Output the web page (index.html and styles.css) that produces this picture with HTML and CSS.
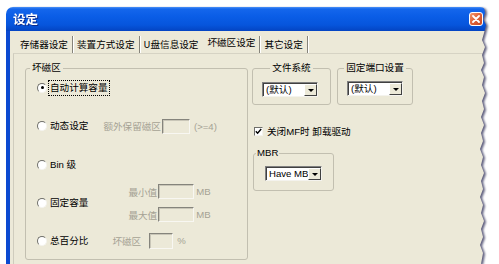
FILE: index.html
```html
<!DOCTYPE html>
<html lang="zh-CN">
<head>
<meta charset="utf-8">
<title>设定</title>
<link rel="stylesheet" href="styles.css">
</head>
<body>
<div class="shadow">
  <div class="window">
    <div class="titlebar">
      <span class="title">设定</span>
      <span class="close"><svg width="8" height="8" viewBox="0 0 8 8"><path d="M1 1 L7 7 M7 1 L1 7" stroke="#fff" stroke-width="1.8" stroke-linecap="round"/></svg></span>
    </div>
    <div class="client">
      <div class="tabs">
        <span class="tab">存储器设定</span>
        <span class="tab">装置方式设定</span>
        <span class="tab pre-active">U盘信息设定</span>
        <span class="tab active">坏磁区设定</span>
        <span class="tab">其它设定</span>
      </div>
      <div class="panel">
        <fieldset class="group bad">
          <legend class="lg-left">坏磁区</legend>
          <div class="rows">
            <div class="row">
              <span class="radio checked"></span><span class="label focus">自动计算容量</span>
            </div>
            <div class="row">
              <span class="radio"></span><span class="label">动态设定</span>
              <span class="dim extra-a">额外保留磁区</span><span class="input in-a"></span><span class="dim note">(&gt;=4)</span>
            </div>
            <div class="row">
              <span class="radio"></span><span class="label">Bin 级</span>
            </div>
            <div class="row">
              <span class="radio"></span><span class="label">固定容量</span>
              <div class="minmax">
                <div class="mm-line"><span class="dim">最小值</span><span class="input in-b"></span><span class="dim unit">MB</span></div>
                <div class="mm-line"><span class="dim">最大值</span><span class="input in-b"></span><span class="dim unit">MB</span></div>
              </div>
            </div>
            <div class="row">
              <span class="radio"></span><span class="label">总百分比</span>
              <span class="dim extra-c">坏磁区</span><span class="input in-c"></span><span class="dim pct">%</span>
            </div>
          </div>
        </fieldset>
        <div class="right">
          <div class="top-groups">
            <fieldset class="group fs-group">
              <legend class="lg-center">文件系统</legend>
              <div class="select sel-fs"><span class="val">(默认)</span><span class="btn"><span class="tri"></span></span></div>
            </fieldset>
            <fieldset class="group port-group">
              <legend class="lg-center">固定端口设置</legend>
              <div class="select sel-port"><span class="val">(默认)</span><span class="btn"><span class="tri"></span></span></div>
            </fieldset>
          </div>
          <div class="check-row">
            <span class="checkbox"><svg width="7" height="7" viewBox="0 0 7 7"><path d="M0.8 3.2 L2.6 5.2 L6.2 1" fill="none" stroke="#000" stroke-width="1.4"/></svg></span>
            <span class="check-label">关闭MF时 卸载驱动</span>
          </div>
          <fieldset class="group mbr">
            <legend class="lg-left2">MBR</legend>
            <div class="select sel-mbr"><span class="val">Have MB</span><span class="btn"><span class="tri"></span></span></div>
          </fieldset>
        </div>
      </div>
    </div>
  </div>
</div>
</body>
</html>
```

FILE: styles.css
```css
html, body {
  margin: 0;
  padding: 0;
  background: #fff;
  height: 264px;
  overflow: hidden;
}
body {
  font-family: "Liberation Sans", "Noto Sans CJK SC", sans-serif;
  font-size: 9.6px;
  color: #000;
}
.shadow {
  padding: 7px 0 0 6px;
  filter: drop-shadow(2px 1px 1px rgba(25, 25, 70, 0.7));
}
.window {
  width: 481px;
  height: 257px;
  display: flex;
  flex-direction: column;
  clip-path: polygon(0 0, 478px 0, 479px 6px, 477px 12px, 480px 18px, 478px 26px, 476px 33px, 479px 40px, 476px 48px, 478px 56px, 475px 63px, 478px 70px, 476px 78px, 479px 86px, 476px 94px, 478px 102px, 475px 110px, 478px 118px, 475px 126px, 477px 134px, 474px 142px, 477px 150px, 475px 158px, 478px 166px, 475px 174px, 477px 182px, 474px 190px, 477px 198px, 475px 206px, 478px 214px, 475px 222px, 477px 230px, 474px 238px, 477px 246px, 475px 257px, 0 257px);
}
.titlebar {
  flex: none;
  height: 24px;
  box-sizing: border-box;
  display: flex;
  align-items: center;
  justify-content: space-between;
  padding: 0 4px 0 7px;
  border-radius: 7px 7px 0 0;
  background: linear-gradient(#4a90f5 0, #1466ec 2px, #0a5de6 40%, #0655dc 75%, #0444c2 100%);
}
.title {
  color: #fff;
  font-family: "Noto Sans CJK SC", sans-serif;
  font-weight: bold;
  font-size: 12.5px;
  line-height: 14px;
  text-shadow: 1px 1px 0 #0b2a8a;
}
.close {
  width: 14px;
  height: 14px;
  box-sizing: border-box;
  border: 1px solid #fff;
  border-radius: 3px;
  background: linear-gradient(135deg, #f09a70 0, #e0653c 45%, #c9461f 100%);
  display: flex;
  align-items: center;
  justify-content: center;
}
.client {
  flex: 1;
  background: #ece9d8;
  border-left: 4px solid #0b49d1;
  padding-top: 5px;
  display: flex;
  flex-direction: column;
}
.tabs {
  display: flex;
  height: 17px;
  margin-left: 6px;
  flex: none;
}
.tab {
  padding: 0 4px;
  line-height: 17px;
  white-space: nowrap;
  border-right: 1px solid #85837a;
  box-shadow: 1px 0 0 #fff;
  font-family: "Noto Sans CJK SC", sans-serif;
}
.tab.pre-active {
  border-right-color: transparent;
  box-shadow: none;
}
.tab.active {
  line-height: 13px;
  padding-bottom: 4px;
}
.panel {
  flex: 1;
  margin-left: 3px;
  border-left: 1px solid #cfccbd;
  border-top: 1px solid #d6d3c4;
  padding: 8px 0 0 11px;
  display: flex;
  align-items: flex-start;
  gap: 4px;
}
.group {
  margin: 0;
  padding: 0;
  min-width: 0;
  border: 1px solid #c2bfb0;
  border-radius: 3px;
}
legend {
  padding: 0 2px;
  line-height: 12px;
  font-family: "Liberation Sans", "Noto Sans CJK SC", sans-serif;
}
.lg-left { margin-left: 4px; }
.lg-left2 { margin-left: 2px; padding: 0 1px; }
.lg-center { margin: 0 auto; }
.bad {
  width: 223px;
  box-sizing: border-box;
}
.rows {
  margin-top: -6px;
  display: grid;
  grid-template-rows: 39px 38.5px 38.5px 38px 37px;
}
.row {
  display: flex;
  align-items: center;
  padding-left: 11px;
  white-space: nowrap;
}
.radio {
  flex: none;
  width: 10px;
  height: 10px;
  box-sizing: border-box;
  border-radius: 50%;
  background: #fff;
  border: 1px solid;
  border-color: #6f6f6a #f4f3ee #f4f3ee #6f6f6a;
  margin-right: 2px;
  display: flex;
  align-items: center;
  justify-content: center;
}
.radio.checked::after {
  content: "";
  width: 3px;
  height: 3px;
  border-radius: 50%;
  background: #000;
}
.label {
  padding: 0 1px;
  line-height: 14px;
}
.focus {
  outline: 1px dotted #000;
}
.dim {
  color: #a5a294;
}
.input {
  flex: none;
  box-sizing: border-box;
  background: #ece9d8;
  border: 1px solid;
  border-color: #85847c #f8f7f2 #f8f7f2 #85847c;
  box-shadow: inset 1px 1px 0 #c9c6b8;
}
.extra-a { margin-left: 14px; }
.in-a { width: 28px; height: 15px; margin-left: 1px; }
.note { margin-left: 4px; }
.minmax {
  margin-left: 39px;
  display: flex;
  flex-direction: column;
  gap: 8px;
}
.mm-line {
  display: flex;
  align-items: center;
}
.in-b { width: 36px; height: 15px; margin-left: 1px; }
.unit { margin-left: 2px; }
.extra-c { margin-left: 23px; }
.in-c { width: 24px; height: 16px; margin-left: 8px; }
.pct { margin-left: 4px; }
.right {
  display: flex;
  flex-direction: column;
  align-items: flex-start;
}
.top-groups {
  display: flex;
  gap: 6px;
}
.fs-group {
  width: 79px;
  box-sizing: border-box;
  padding: 8px 0 7px 0;
}
.port-group {
  width: 76px;
  box-sizing: border-box;
  padding: 7px 0 8px 0;
}
.select {
  box-sizing: border-box;
  height: 15px;
  display: flex;
  background: #fff;
  border: 1px solid;
  border-color: #808080 #f4f3ee #f4f3ee #808080;
  box-shadow: inset 1px 1px 0 #404040;
}
.sel-fs { width: 56px; margin-left: 9px; }
.sel-port { width: 56px; margin-left: 9px; }
.sel-mbr { width: 57px; margin-left: 11px; }
.val {
  flex: 1;
  padding-left: 3px;
  line-height: 13px;
  white-space: nowrap;
  overflow: hidden;
}
.btn {
  flex: none;
  width: 13px;
  margin: 1px 0 0 0;
  box-sizing: border-box;
  background: #ece9d8;
  border: 1px solid;
  border-color: #fff #404040 #404040 #fff;
  display: flex;
  align-items: center;
  justify-content: center;
}
.tri {
  width: 0;
  height: 0;
  border-left: 3px solid transparent;
  border-right: 3px solid transparent;
  border-top: 3px solid #000;
}
.check-row {
  margin-top: 20px;
  padding-left: 2px;
  display: flex;
  align-items: center;
  line-height: 13px;
}
.checkbox {
  width: 9px;
  height: 9px;
  box-sizing: border-box;
  background: #fff;
  border: 1px solid;
  border-color: #6f6f6a #f4f3ee #f4f3ee #6f6f6a;
  display: flex;
  align-items: center;
  justify-content: center;
}
.check-label {
  margin-left: 4px;
  white-space: nowrap;
}
.mbr {
  margin-top: 9px;
  margin-left: 1px;
  width: 81px;
  box-sizing: border-box;
  padding: 7px 0 9px 0;
}
```
